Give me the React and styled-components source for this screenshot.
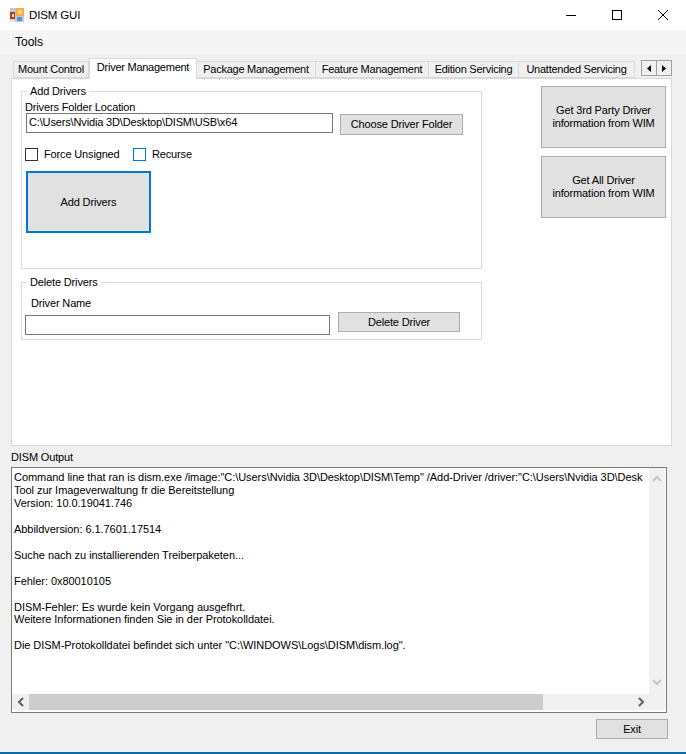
import React from "react"
import styled, { createGlobalStyle } from "styled-components"

const GlobalStyle = createGlobalStyle`
  html, body {
    margin: 0;
    padding: 0;
    background: #f0f0f0;
  }
  * {
    box-sizing: border-box;
  }
`

const Window = styled.div`
  width: 686px;
  height: 754px;
  overflow: hidden;
  display: flex;
  flex-direction: column;
  background: #f0f0f0;
  color: #000;
  font-family: "Liberation Sans", Arial, sans-serif;
  font-size: 11px;
  letter-spacing: -0.15px;
  line-height: 13px;
`

const TitleBar = styled.div`
  height: 30px;
  flex: none;
  background: #fff;
  display: flex;
  align-items: center;
  padding-left: 9px;
`

const AppTitle = styled.div`
  margin-left: 4px;
  font-size: 11.5px;
`

const WindowControls = styled.div`
  margin-left: auto;
  display: flex;
`

const WindowControl = styled.div`
  width: 46px;
  height: 30px;
  display: flex;
  align-items: center;
  justify-content: center;
`

const MenuBar = styled.div`
  height: 24px;
  flex: none;
  background: #f5f5f5;
  display: flex;
  align-items: center;
  padding-left: 15px;
  font-size: 12px;
  letter-spacing: 0;
`

const Body = styled.div`
  flex: 1;
  display: flex;
  flex-direction: column;
  padding: 3px 0 0 11px;
`

const TabRow = styled.div`
  height: 21px;
  display: flex;
  align-items: flex-end;
  padding-left: 2px;
  position: relative;
  z-index: 1;
`

const Tab = styled.div`
  width: ${(p) => p.$width}px;
  height: ${(p) => (p.$active ? 21 : 17)}px;
  flex: none;
  display: flex;
  justify-content: center;
  align-items: center;
  padding-bottom: ${(p) => (p.$active ? 3 : 0)}px;
  margin-bottom: ${(p) => (p.$active ? -1 : 0)}px;
  background: ${(p) => (p.$active ? "#fff" : "#f0f0f0")};
  border: 1px solid #d9d9d9;
  border-bottom: ${(p) => (p.$active ? "none" : "1px solid #d9d9d9")};
  border-left: ${(p) => (p.$first || p.$active ? "1px solid #d9d9d9" : "none")};
  letter-spacing: -0.25px;
  white-space: nowrap;
`

const TabScroller = styled.div`
  display: flex;
  width: 31px;
  height: 16px;
  margin: 0 0 2px 6px;
  flex: none;
  border: 1px solid #a0a0a0;
  background: #f0f0f0;
`

const TabScrollButton = styled.div`
  flex: 1;
  display: flex;
  align-items: center;
  justify-content: center;
  & + & {
    border-left: 1px solid #a0a0a0;
  }
`

const Panel = styled.div`
  width: 661px;
  height: 368px;
  flex: none;
  background: #fff;
  border: 1px solid #d9d9d9;
  display: flex;
  padding: 6px 0 0 9px;
`

const LeftColumn = styled.div`
  width: 461px;
  flex: none;
  display: flex;
  flex-direction: column;
  gap: 7px;
`

const RightColumn = styled.div`
  margin: 1px 0 0 59px;
  display: flex;
  flex-direction: column;
  gap: 8px;
`

const GroupBox = styled.fieldset`
  height: ${(p) => p.$height}px;
  margin: 0;
  padding: 0 0 0 4px;
  border: 1px solid #dcdcdc;
  min-width: 0;
`

const GroupTitle = styled.legend`
  margin-left: 1px;
  padding: 0 3px 0 3px;
  line-height: 13px;
`

const FieldLabel = styled.div`
  margin: ${(p) => p.$top || 0}px 0 ${(p) => p.$bottom || 0}px ${(p) => p.$indent || 0}px;
`

const FieldRow = styled.div`
  display: flex;
  align-items: flex-start;
  gap: ${(p) => p.$gap}px;
  margin-left: ${(p) => p.$indent || 0}px;
`

const TextField = styled.div`
  width: ${(p) => p.$width}px;
  height: 20px;
  flex: none;
  border: 1px solid #7a7a7a;
  background: #fff;
  padding: 2px 2px;
  white-space: nowrap;
`

const WinButton = styled.div`
  width: ${(p) => p.$width}px;
  height: ${(p) => p.$height}px;
  flex: none;
  display: flex;
  align-items: center;
  justify-content: center;
  text-align: center;
  background: #e1e1e1;
  border: ${(p) => (p.$focused ? "2px solid #0078d7" : "1px solid #adadad")};
  margin-top: ${(p) => p.$top || 0}px;
`

const CheckRow = styled.div`
  display: flex;
  align-items: center;
  margin: 13px 0 10px -1px;
  height: 13px;
`

const CheckBox = styled.div`
  width: 13px;
  height: 13px;
  flex: none;
  background: #fff;
  border: 1px solid ${(p) => (p.$focused ? "#0078d7" : "#333")};
  margin-right: 6px;
`

const CheckLabel = styled.div`
  width: ${(p) => p.$width}px;
  white-space: nowrap;
`

const OutputLabel = styled.div`
  height: 21px;
  padding-top: 5px;
`

const OutputBox = styled.div`
  width: 656px;
  height: 246px;
  flex: none;
  border: 1px solid #7a7a7a;
  background: #fff;
  padding-right: 1px;
  padding-bottom: 2px;
  display: grid;
  grid-template-columns: 1fr 16px;
  grid-template-rows: 1fr 16px;
`

const OutputText = styled.pre`
  margin: 0;
  padding: 3px 0 0 2px;
  overflow: hidden;
  font: inherit;
  letter-spacing: -0.05px;
  line-height: 12.95px;
  white-space: pre;
`

const VerticalBar = styled.div`
  background: #f0f0f0;
  display: flex;
  flex-direction: column;
  justify-content: space-between;
  align-items: center;
  padding: 7px 0 8px;
`

const HorizontalBar = styled.div`
  background: #f0f0f0;
  display: flex;
  align-items: center;
  grid-column: 1 / 2;
`

const ArrowCell = styled.div`
  width: 17px;
  height: 100%;
  flex: none;
  display: flex;
  align-items: center;
  justify-content: center;
`

const BarThumb = styled.div`
  width: 514px;
  height: 100%;
  flex: none;
  background: #cdcdcd;
`

const BarGap = styled.div`
  flex: 1;
`

const CornerCell = styled.div`
  background: #f0f0f0;
`

const FooterRow = styled.div`
  width: 657px;
  display: flex;
  justify-content: flex-end;
  margin-top: 6px;
`

const TaskbarEdge = styled.div`
  height: 2px;
  flex: none;
  background: #0a6aa8;
`

const AppIcon = () => (
  <svg width="16" height="16" viewBox="0 0 16 16">
    <rect x="1" y="1" width="14" height="14" fill="#c9c9c9" />
    <rect x="7" y="1" width="8" height="8" fill="#f4b042" />
    <rect x="9" y="3" width="4" height="4" fill="#fbd27d" />
    <rect x="1" y="5" width="5" height="7" fill="#a8431c" />
    <rect x="3" y="7" width="2" height="3" fill="#e8d9c0" />
    <rect x="8" y="10" width="5" height="4" fill="#4f8fd6" />
    <rect x="1" y="13" width="5" height="2" fill="#e5e5e5" />
  </svg>
)

const Chevron = ({ dir, color }) => {
  const paths = {
    up: "M1 6 L5 2 L9 6",
    down: "M1 2 L5 6 L9 2",
    left: "M6 1 L2 5 L6 9",
    right: "M2 1 L6 5 L2 9",
  }
  const box = dir === "up" || dir === "down" ? "0 0 10 8" : "0 0 8 10"
  const w = dir === "up" || dir === "down" ? 10 : 8
  const h = dir === "up" || dir === "down" ? 8 : 10
  return (
    <svg width={w} height={h} viewBox={box}>
      <path d={paths[dir]} fill="none" stroke={color} strokeWidth="2" />
    </svg>
  )
}

const outputLines = `Command line that ran is dism.exe /image:"C:\\Users\\Nvidia 3D\\Desktop\\DISM\\Temp" /Add-Driver /driver:"C:\\Users\\Nvidia 3D\\Desk
Tool zur Imageverwaltung fr die Bereitstellung
Version: 10.0.19041.746

Abbildversion: 6.1.7601.17514

Suche nach zu installierenden Treiberpaketen...

Fehler: 0x80010105

DISM-Fehler: Es wurde kein Vorgang ausgefhrt.
Weitere Informationen finden Sie in der Protokolldatei.

Die DISM-Protokolldatei befindet sich unter "C:\\WINDOWS\\Logs\\DISM\\dism.log".`

const tabs = [
  { label: "Mount Control", width: 76, first: true },
  { label: "Driver Management", width: 108, active: true },
  { label: "Package Management", width: 119 },
  { label: "Feature Management", width: 113 },
  { label: "Edition Servicing", width: 90 },
  { label: "Unattended Servicing", width: 116 },
]

const App = () => {
  return (
    <Window>
      <GlobalStyle />
      <TitleBar>
        <AppIcon />
        <AppTitle>DISM GUI</AppTitle>
        <WindowControls>
          <WindowControl>
            <svg width="10" height="10" viewBox="0 0 10 10">
              <path d="M0 5.5 H10" stroke="#000" />
            </svg>
          </WindowControl>
          <WindowControl>
            <svg width="10" height="10" viewBox="0 0 10 10">
              <rect x="0.5" y="0.5" width="9" height="9" fill="none" stroke="#000" />
            </svg>
          </WindowControl>
          <WindowControl>
            <svg width="10" height="10" viewBox="0 0 10 10">
              <path d="M0 0 L10 10 M10 0 L0 10" stroke="#000" />
            </svg>
          </WindowControl>
        </WindowControls>
      </TitleBar>
      <MenuBar>Tools</MenuBar>
      <Body>
        <TabRow>
          {tabs.map((t) => (
            <Tab key={t.label} $width={t.width} $active={t.active} $first={t.first}>
              {t.label}
            </Tab>
          ))}
          <TabScroller>
            <TabScrollButton>
              <svg width="4" height="7" viewBox="0 0 4 7">
                <path d="M4 0 V7 L0 3.5 Z" fill="#000" />
              </svg>
            </TabScrollButton>
            <TabScrollButton>
              <svg width="4" height="7" viewBox="0 0 4 7">
                <path d="M0 0 V7 L4 3.5 Z" fill="#000" />
              </svg>
            </TabScrollButton>
          </TabScroller>
        </TabRow>
        <Panel>
          <LeftColumn>
            <GroupBox $height={184}>
              <GroupTitle>Add Drivers</GroupTitle>
              <FieldLabel $top={3} $bottom={-1} $indent={-1}>
                Drivers Folder Location
              </FieldLabel>
              <FieldRow $gap={7}>
                <TextField $width={307}>C:\Users\Nvidia 3D\Desktop\DISM\USB\x64</TextField>
                <WinButton $width={123} $height={21} $top={1}>
                  Choose Driver Folder
                </WinButton>
              </FieldRow>
              <CheckRow>
                <CheckBox />
                <CheckLabel $width={89}>Force Unsigned</CheckLabel>
                <CheckBox $focused />
                <CheckLabel>Recurse</CheckLabel>
              </CheckRow>
              <WinButton $width={125} $height={62} $focused>
                Add Drivers
              </WinButton>
            </GroupBox>
            <GroupBox $height={64}>
              <GroupTitle>Delete Drivers</GroupTitle>
              <FieldLabel $indent={5} $top={8} $bottom={5}>
                Driver Name
              </FieldLabel>
              <FieldRow $gap={8} $indent={-1}>
                <TextField $width={305} />
                <WinButton $width={122} $height={20} $top={-3}>
                  Delete Driver
                </WinButton>
              </FieldRow>
            </GroupBox>
          </LeftColumn>
          <RightColumn>
            <WinButton $width={125} $height={62}>
              Get 3rd Party Driver
              <br />
              information from WIM
            </WinButton>
            <WinButton $width={125} $height={62}>
              Get All Driver
              <br />
              information from WIM
            </WinButton>
          </RightColumn>
        </Panel>
        <OutputLabel>DISM Output</OutputLabel>
        <OutputBox>
          <OutputText>{outputLines}</OutputText>
          <VerticalBar>
            <Chevron dir="up" color="#c4c4c4" />
            <Chevron dir="down" color="#c4c4c4" />
          </VerticalBar>
          <HorizontalBar>
            <ArrowCell>
              <Chevron dir="left" color="#606060" />
            </ArrowCell>
            <BarThumb />
            <BarGap />
            <ArrowCell>
              <Chevron dir="right" color="#606060" />
            </ArrowCell>
          </HorizontalBar>
          <CornerCell />
        </OutputBox>
        <FooterRow>
          <WinButton $width={72} $height={20}>
            Exit
          </WinButton>
        </FooterRow>
      </Body>
      <TaskbarEdge />
    </Window>
  )
}

export default App
